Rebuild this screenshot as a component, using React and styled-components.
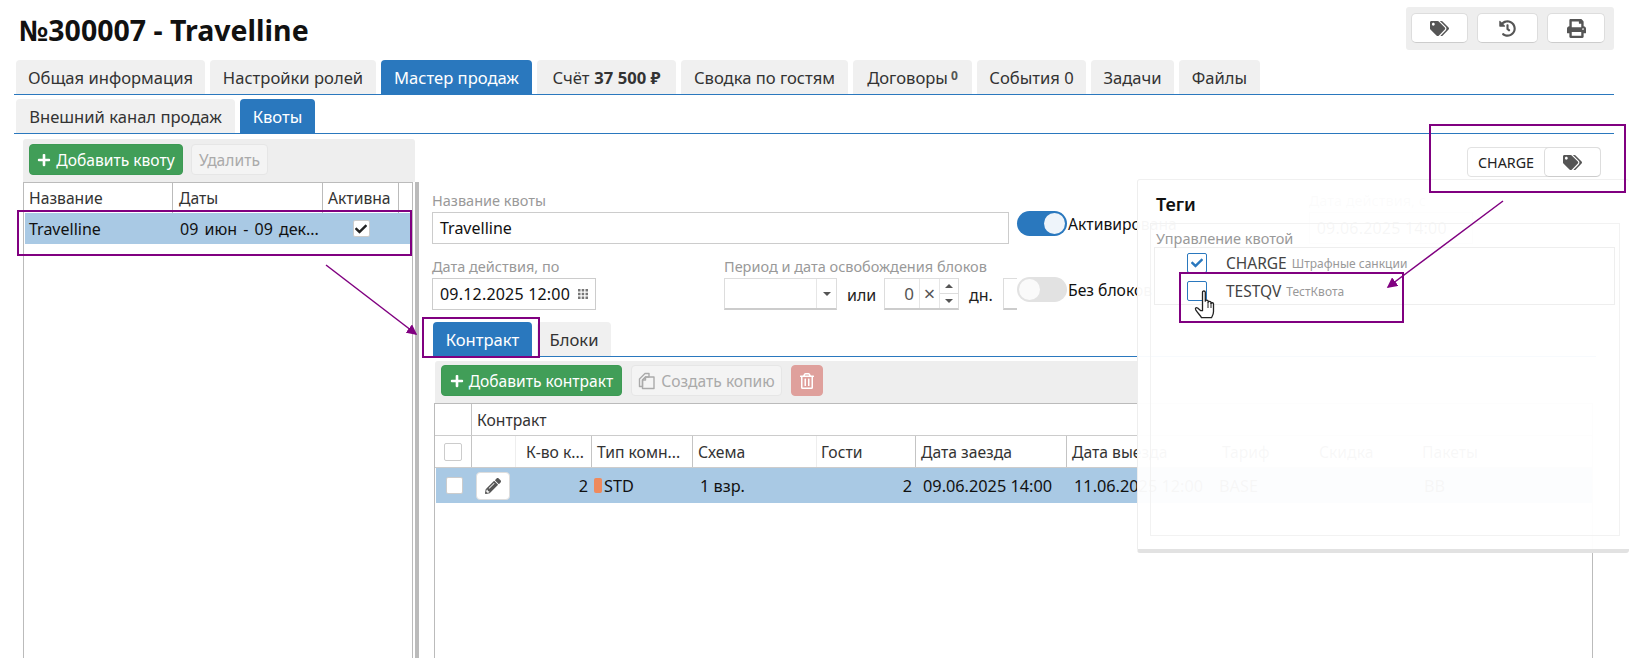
import React from 'react'
import styled, { createGlobalStyle } from 'styled-components'
import { FaTags, FaPrint, FaPlus, FaPencilAlt, FaHistory, FaRegTrashAlt, FaCheck } from 'react-icons/fa'

const Global = createGlobalStyle`
  html, body { margin: 0; padding: 0; background: #fff; overflow: hidden; }
  body { font-family: "Noto Sans", "Liberation Sans", sans-serif; font-size: 16px; color: #222; }
  * { box-sizing: border-box; }
`

const Page = styled.div`
  position: relative;
  width: 1629px;
  height: 658px;
  overflow: hidden;
  padding: 7px 15px 0 14px;
`

const Head = styled.header`
  display: flex;
  justify-content: space-between;
  height: 53px;
`

const Title = styled.h1`
  margin: 7px 0 0 5px;
  font-size: 28.5px;
  line-height: 32px;
  font-weight: 700;
  color: #111;
`

const HeadTools = styled.div`
  display: flex;
  gap: 9px;
  height: 43px;
  padding: 6px 9px 0 5px;
  background: #eee;
  border-radius: 3px;
`

const IconBtn = styled.button`
  display: flex;
  align-items: center;
  justify-content: center;
  width: ${p => p.$w || 58}px;
  height: 30px;
  padding: 0;
  background: #fff;
  border: 1px solid #ddd;
  border-bottom-color: #ccc;
  border-radius: 5px;
  color: #555;
  font-size: 19px;
`

const TabRow = styled.nav`
  display: flex;
  gap: 5px;
  height: 35px;
  margin-top: ${p => p.$top || 0}px;
  width: ${p => (p.$w ? `${p.$w}px` : 'auto')};
  padding-left: ${p => p.$left ?? 2}px;
  border-bottom: 1px solid #2a78be;
`

const Tab = styled.div`
  display: flex;
  align-items: center;
  justify-content: center;
  width: ${p => p.$w}px;
  height: 34px;
  background: ${p => (p.$active ? '#2a78be' : '#f0f0f0')};
  color: ${p => (p.$active ? '#fff' : '#333')};
  border-radius: 4px 4px 0 0;
  font-size: 16.6px;
  white-space: nowrap;
  b { font-weight: 700; margin-left: 5px; }
  small { font-size: 12px; font-weight: 700; margin-left: 3px; color: #555; margin-top: -3px; }
`

const Main = styled.main`
  display: flex;
  height: 525px;
  margin-top: 5px;
`

const LeftPane = styled.section`
  flex: none;
  width: 392px;
  margin-left: 9px;
`

const Toolbar = styled.div`
  display: flex;
  align-items: flex-start;
  gap: ${p => p.$gap || 8}px;
  height: ${p => p.$h || 43}px;
  width: ${p => (p.$w ? `${p.$w}px` : 'auto')};
  margin-left: ${p => p.$left || 0}px;
  padding: ${p => p.$top ?? 5}px 6px 0;
  background: #eee;
  border-radius: 3px 3px 0 0;
`

const Btn = styled.button`
  display: flex;
  align-items: center;
  justify-content: center;
  gap: 5px;
  width: ${p => p.$w}px;
  height: 31px;
  padding: 0;
  font-family: inherit;
  font-size: 15.6px;
  white-space: nowrap;
  border-radius: 4px;
  border: 1px solid ${p => (p.$kind === 'green' ? '#3d9a54' : p.$kind === 'red' ? '#dfa09c' : '#e6e6e6')};
  background: ${p => (p.$kind === 'green' ? '#419e58' : p.$kind === 'red' ? '#dfa09c' : '#f4f4f4')};
  color: ${p => (p.$kind ? '#fff' : '#aaa')};
`

const ListGrid = styled.div`
  width: 390px;
  height: 476px;
  border: 1px solid #bbb;
  border-bottom: 0;
`

const ListHead = styled.div`
  display: grid;
  grid-template-columns: 149px 150px 76px 1fr;
  height: 30px;
`

const HeadCell = styled.div`
  display: flex;
  align-items: center;
  padding-left: ${p => p.$pad ?? 5}px;
  font-size: 15.7px;
  color: #333;
  white-space: nowrap;
  overflow: hidden;
  border-right: ${p => (p.$noline ? 0 : '1px solid #bbb')};
`

const ListRow = styled.div`
  display: grid;
  grid-template-columns: 148px 150px 76px;
  align-items: center;
  height: 31px;
  margin-left: 1px;
  background: #a9c9e4;
  color: #111;
`

const Cell = styled.div`
  padding-left: ${p => p.$pad ?? 4}px;
  font-size: 16px;
  word-spacing: ${p => (p.$wide ? 2 : 0)}px;
  white-space: nowrap;
  overflow: hidden;
`

const CheckCell = styled.div`
  display: flex;
  justify-content: center;
`

const Check = styled.span`
  display: inline-flex;
  align-items: center;
  justify-content: center;
  flex: none;
  width: ${p => p.$size || 17}px;
  height: ${p => p.$size || 17}px;
  background: #fff;
  border: 1px solid ${p => p.$border || '#ccc'};
  border-radius: 2px;
  color: ${p => p.$color || '#222'};
  font-size: 12px;
`

const Splitter = styled.div`
  flex: none;
  width: 4px;
  height: 476px;
  margin-top: 43px;
  background: #bbb;
`

const RightPane = styled.section`
  flex: none;
  width: 1194px;
  padding-left: 13px;
`

const ChipRow = styled.div`
  display: flex;
  justify-content: flex-end;
  height: 53px;
  padding: 8px 12px 0 0;
`

const Chip = styled.div`
  position: relative;
  z-index: 3;
  display: flex;
  align-items: center;
  justify-content: space-between;
  width: 134px;
  height: 30px;
  padding-left: 10px;
  background: #fff;
  border: 1px solid #e2e2e2;
  border-radius: 4px;
  font-size: 14.3px;
  color: #222;
`

const ChipBtn = styled(IconBtn)`
  margin-right: -1px;
`

const FormRow = styled.div`
  display: flex;
  align-items: flex-start;
  margin-bottom: ${p => p.$mb || 0}px;
`

const Field = styled.div`
  flex: none;
  width: ${p => p.$w}px;
  margin-left: ${p => p.$ml || 0}px;
  margin-right: ${p => p.$mr || 0}px;
`

const Label = styled.label`
  display: block;
  height: 20px;
  font-size: 14.5px;
  line-height: 16px;
  color: #999;
  white-space: nowrap;
`

const Input = styled.div`
  display: flex;
  align-items: center;
  justify-content: space-between;
  height: 32px;
  padding: 0 7px;
  border: 1px solid #ccc;
  font-size: 16px;
  letter-spacing: ${p => p.$ls || 0}px;
  color: #111;
  white-space: nowrap;
`

const Spin = styled.div`
  flex: none;
  display: flex;
  align-items: stretch;
  width: ${p => p.$w}px;
  height: 32px;
  border: 1px solid #ddd;
  border-right-width: ${p => (p.$open ? 0 : 1)}px;
  border-bottom: 2px solid #ccc;
  background: #fff;
`

const SpinValue = styled.div`
  flex: 1;
  display: flex;
  align-items: center;
  justify-content: flex-end;
  padding-right: 5px;
  font-size: 17px;
  color: #555;
`

const SpinSide = styled.div`
  flex: none;
  width: ${p => p.$w}px;
  display: flex;
  flex-direction: column;
  align-items: stretch;
  justify-content: center;
  border-left: 1px solid #e6e6e6;
  color: #555;
  font-size: 20px;
  text-align: center;
`

const ArrowCell = styled.span`
  flex: 1;
  display: flex;
  align-items: center;
  justify-content: center;
  border-bottom: ${p => (p.$line ? '1px solid #ddd' : 0)};
`

const Arrow = styled.span`
  width: 0;
  height: 0;
  border-left: 4px solid transparent;
  border-right: 4px solid transparent;
  ${p => (p.$up ? 'border-bottom: 4px solid #555;' : 'border-top: 4px solid #555;')}
`

const Plain = styled.span`
  flex: none;
  width: ${p => p.$w}px;
  padding: 6px 0 0 10px;
  font-size: 16px;
  color: #222;
`

const ToggleWrap = styled.div`
  flex: none;
  display: flex;
  align-items: center;
  gap: 1px;
  margin: 19px 0 0 ${p => p.$left || 0}px;
  height: 25px;
  font-size: 15.7px;
  color: #111;
  white-space: nowrap;
`

const Track = styled.span`
  display: flex;
  justify-content: ${p => (p.$on ? 'flex-end' : 'flex-start')};
  align-items: center;
  width: 50px;
  height: 25px;
  padding: 2px;
  border-radius: 13px;
  background: ${p => (p.$on ? '#2a78be' : '#e2e2e2')};
`

const Knob = styled.span`
  width: 21px;
  height: 21px;
  border-radius: 50%;
  background: ${p => (p.$on ? '#eef4fa' : '#fafafa')};
`

const Spacer = styled.div`
  height: 4px;
`

const GridBox = styled.div`
  width: 1159px;
  height: 255px;
  margin-left: 2px;
  border: 1px solid #bbb;
  border-bottom: 0;
`

const Row = styled.div`
  display: flex;
  align-items: center;
  height: ${p => p.$h || 32}px;
  background: ${p => (p.$sel ? '#a9c9e4' : 'transparent')};
  border-bottom: ${p => (p.$line ? '1px solid #ccc' : 0)};
  margin-left: ${p => (p.$sel ? 1 : 0)}px;
  color: ${p => (p.$sel ? '#111' : '#333')};
  font-size: ${p => (p.$sel ? 16.3 : 15.7)}px;
`

const Col = styled.div`
  flex: none;
  display: flex;
  align-items: center;
  justify-content: ${p => p.$just || 'flex-start'};
  width: ${p => p.$w}px;
  height: 100%;
  padding-left: ${p => p.$pad ?? 5}px;
  padding-right: ${p => p.$right || 0}px;
  white-space: nowrap;
  overflow: hidden;
  border-right: ${p => (p.$line ? `1px solid ${p.$soft ? '#eee' : '#c4c4c4'}` : 0)};
`

const Swatch = styled.span`
  flex: none;
  width: 8px;
  height: 15px;
  margin-right: 2px;
  border-radius: 2px;
  background: #ef8a5d;
`

const EditBtn = styled.span`
  display: flex;
  align-items: center;
  justify-content: center;
  width: 34px;
  height: 28px;
  background: #fff;
  border: 1px solid #ddd;
  border-radius: 4px;
  color: #555;
  font-size: 16px;
`

const TagsPanel = styled.aside`
  position: absolute;
  left: 1137px;
  top: 179px;
  width: 492px;
  height: 374px;
  padding: 12px 0 0 12px;
  background: rgba(255, 255, 255, 0.965);
  border-top: 1px solid #f0f0f0;
  border-left: 1px solid #eee;
  border-bottom: 4px solid #e2e2e2;
  border-radius: 3px;
`

const PanelTitle = styled.div`
  height: 31px;
  margin-left: 6px;
  font-size: 18px;
  line-height: 25px;
  font-weight: 600;
  color: #111;
`

const PanelBox = styled.div`
  width: 470px;
  height: 313px;
  padding: 5px 0 0 5px;
  border: 1px solid #f2f2f2;
`

const PanelLabel = styled.div`
  height: 18px;
  font-size: 14.5px;
  line-height: 19px;
  color: #999;
`

const TagList = styled.div`
  width: 461px;
  height: 58px;
  margin-left: -2px;
  padding: 1px 0 0 32px;
  border: 1px solid #eee;
`

const TagLine = styled.div`
  display: flex;
  align-items: center;
  height: 28px;
`

const TagName = styled.span`
  margin-left: 19px;
  font-size: 15.5px;
  color: #444;
`

const TagNote = styled.span`
  margin-left: 5px;
  font-size: 12px;
  color: #999;
`

// annotations drawn on the screenshot
const Frame = styled.div`
  position: absolute;
  left: ${p => p.$x}px;
  top: ${p => p.$y}px;
  width: ${p => p.$w}px;
  height: ${p => p.$h}px;
  border: 2px solid #800080;
  pointer-events: none;
  z-index: 5;
`

const Marks = styled.svg`
  position: absolute;
  left: 0;
  top: 0;
  z-index: 6;
  pointer-events: none;
`

const HandIcon = styled.svg`
  position: absolute;
  left: 1193px;
  top: 290px;
  z-index: 7;
`

const Hand = () => (
  <HandIcon width="24" height="31" viewBox="0 0 24 31">
    <path
      d="M9.500 2.200c0-1.600 2.800-1.600 2.800 0v9c.2-1.400 2.800-1.500 2.900 0v1c.3-1.300 2.700-1.200 2.800.2v1c.4-1 2.400-.9 2.500.5v7.500c0 3-1.200 4.300-2 6.300H8.500c-1-2.200-3.500-4.300-5.600-7.500-1.200-2 .2-3.200 1.700-2.200l3.200 2.700h1.700z"
      fill="#fff"
      stroke="#222"
      strokeWidth="1.3"
      strokeLinejoin="round"
    />
    <path d="M15 12v6M18 13v5" stroke="#222" strokeWidth="1" fill="none" />
  </HandIcon>
)

const CopyIcon = () => (
  <svg width="18" height="18" viewBox="0 0 18 18" fill="none" stroke="#aaa" strokeWidth="1.4" strokeLinejoin="round">
    <path d="M7 1.500h4v3.500H7.500L4.500 8v6.500H1.500V7z" />
    <path d="M7.500 5H16v11.500H4.500V8z" />
    <path d="M7.500 5v3h-3" />
  </svg>
)

const GridIcon = () => (
  <svg width="10" height="10" viewBox="0 0 10 10" fill="#777">
    <path d="M0 0h2.500v2.500H0zM3.700 0h2.500v2.500H3.700zM7.500 0H10v2.500H7.500zM0 3.700h2.500v2.500H0zM3.700 3.700h2.500v2.500H3.700zM7.500 3.700H10v2.500H7.500zM0 7.500h2.500V10H0zM3.700 7.500h2.500V10H3.700zM7.500 7.500H10V10H7.500z" />
  </svg>
)

const columns = [
  { w: 44, line: true, soft: true },
  { w: 76, text: 'К-во к...', line: true, pad: 10 },
  { w: 101, text: 'Тип комн...', line: true },
  { w: 124, text: 'Схема', line: true, soft: true },
  { w: 99, text: 'Гости', line: true, pad: 4 },
  { w: 151, text: 'Дата заезда', line: true },
  { w: 150, text: 'Дата выезда', line: true, soft: true },
  { w: 99, text: 'Тариф', line: true, soft: true },
  { w: 101, text: 'Скидка', line: true, soft: true, pad: 3 },
  { w: 174, text: 'Пакеты', line: true, soft: true },
]

export default function App() {
  return (
    <Page>
      <Global />
      <Head>
        <Title>№300007 - Travelline</Title>
        <HeadTools>
          <IconBtn $w={57}><FaTags /></IconBtn>
          <IconBtn $w={61}><FaHistory size={17} /></IconBtn>
          <IconBtn><FaPrint /></IconBtn>
        </HeadTools>
      </Head>

      <TabRow>
        <Tab $w={189}>Общая информация</Tab>
        <Tab $w={166}>Настройки ролей</Tab>
        <Tab $w={151} $active>Мастер продаж</Tab>
        <Tab $w={139}>Счёт<b>37 500 ₽</b></Tab>
        <Tab $w={167}>Сводка по гостям</Tab>
        <Tab $w={119}>Договоры<small>0</small></Tab>
        <Tab $w={109}>События 0</Tab>
        <Tab $w={83}>Задачи</Tab>
        <Tab $w={81}>Файлы</Tab>
      </TabRow>
      <TabRow $top={4}>
        <Tab $w={219}>Внешний канал продаж</Tab>
        <Tab $w={75} $active>Квоты</Tab>
      </TabRow>

      <Main>
        <LeftPane>
          <Toolbar>
            <Btn $w={154} $kind="green"><FaPlus size={14} />Добавить квоту</Btn>
            <Btn $w={77}>Удалить</Btn>
          </Toolbar>
          <ListGrid>
            <ListHead>
              <HeadCell>Название</HeadCell>
              <HeadCell $pad={6}>Даты</HeadCell>
              <HeadCell>Активна</HeadCell>
              <HeadCell $noline />
            </ListHead>
            <ListRow>
              <Cell>Travelline</Cell>
              <Cell $pad={7} $wide>09 июн - 09 дек...</Cell>
              <CheckCell><Check><FaCheck /></Check></CheckCell>
            </ListRow>
          </ListGrid>
        </LeftPane>
        <Splitter />
        <RightPane>
          <ChipRow>
            <Chip>
              CHARGE
              <ChipBtn $w={57}><FaTags /></ChipBtn>
            </Chip>
          </ChipRow>
          <FormRow $mb={14}>
            <Field $w={577}>
              <Label>Название квоты</Label>
              <Input>Travelline</Input>
            </Field>
            <ToggleWrap $left={8}>
              <Track $on><Knob $on /></Track>
              Активирована
            </ToggleWrap>
            <Field $w={164} $ml={132}>
              <Label>Дата действия, с</Label>
              <Input $ls={0.2}>09.06.2025 14:00</Input>
            </Field>
          </FormRow>
          <FormRow>
            <Field $w={164} $mr={128}>
              <Label>Дата действия, по</Label>
              <Input $ls={0.2}>
                09.12.2025 12:00
                <GridIcon />
              </Input>
            </Field>
            <div>
              <Label>Период и дата освобождения блоков</Label>
              <FormRow>
                <Spin $w={113}>
                  <SpinValue />
                  <SpinSide $w={20}><ArrowCell><Arrow /></ArrowCell></SpinSide>
                </Spin>
                <Plain $w={47}>или</Plain>
                <Spin $w={75}>
                  <SpinValue>0</SpinValue>
                  <SpinSide $w={20}>×</SpinSide>
                  <SpinSide $w={19}>
                    <ArrowCell $line><Arrow $up /></ArrowCell>
                    <ArrowCell><Arrow /></ArrowCell>
                  </SpinSide>
                </Spin>
                <Plain $w={44}>дн.</Plain>
                <Spin $w={14} $open />
              </FormRow>
            </div>
            <ToggleWrap>
              <Track><Knob /></Track>
              Без блоков
            </ToggleWrap>
          </FormRow>
          <TabRow $left={1} $top={12} $w={1164}>
            <Tab $w={99} $active>Контракт</Tab>
            <Tab $w={74}>Блоки</Tab>
          </TabRow>
          <Spacer />
          <Toolbar $gap={9} $h={42} $w={1162} $left={3} $top={4}>
            <Btn $w={181} $kind="green"><FaPlus size={14} />Добавить контракт</Btn>
            <Btn $w={151}><CopyIcon />Создать копию</Btn>
            <Btn $w={32} $kind="red"><FaRegTrashAlt size={16} /></Btn>
          </Toolbar>
          <GridBox>
            <Row $line>
              <Col $w={37} $line />
              <Col $w={400}>Контракт</Col>
            </Row>
            <Row $line>
              <Col $w={37} $pad={9} $line><Check $size={18} /></Col>
              {columns.map((c, i) => (
                <Col key={i} $w={c.w} $pad={c.pad} $line={c.line} $soft={c.soft}>{c.text}</Col>
              ))}
            </Row>
            <Row $sel $h={35}>
              <Col $w={37} $pad={10}><Check $size={17} /></Col>
              <Col $w={43} $pad={3}><EditBtn><FaPencilAlt /></EditBtn></Col>
              <Col $w={76} $just="flex-end" $right={4}>2</Col>
              <Col $w={101} $pad={2}><Swatch />STD</Col>
              <Col $w={124} $pad={7}>1 взр.</Col>
              <Col $w={99} $just="flex-end" $right={4}>2</Col>
              <Col $w={151} $pad={7}>09.06.2025 14:00</Col>
              <Col $w={150} $pad={7}>11.06.2025 12:00</Col>
              <Col $w={99} $pad={2}>BASE</Col>
              <Col $w={101} />
              <Col $w={174} $pad={7}>BB</Col>
            </Row>
          </GridBox>
        </RightPane>
      </Main>

      <TagsPanel>
        <PanelTitle>Теги</PanelTitle>
        <PanelBox>
          <PanelLabel>Управление квотой</PanelLabel>
          <TagList>
            <TagLine>
              <Check $size={20} $border="#2a78be" $color="#2a78be"><FaCheck /></Check>
              <TagName>CHARGE</TagName>
              <TagNote>Штрафные санкции</TagNote>
            </TagLine>
            <TagLine>
              <Check $size={20} $border="#2a78be" />
              <TagName>TESTQV</TagName>
              <TagNote>ТестКвота</TagNote>
            </TagLine>
          </TagList>
        </PanelBox>
      </TagsPanel>

      <Frame $x={17} $y={210} $w={395} $h={46} />
      <Frame $x={422} $y={317} $w={118} $h={41} />
      <Frame $x={1179} $y={272} $w={225} $h={51} />
      <Frame $x={1429} $y={124} $w={197} $h={69} />
      <Marks width="1629" height="658">
        <defs>
          <marker id="tip" markerWidth="7" markerHeight="7" refX="6" refY="3.500" orient="auto">
            <path d="M0 0L7 3.500L0 7z" fill="#800080" />
          </marker>
        </defs>
        <line x1="326" y1="265" x2="416" y2="334" stroke="#800080" strokeWidth="1.500" markerEnd="url(#tip)" />
        <line x1="1503" y1="201" x2="1388" y2="287" stroke="#800080" strokeWidth="1.500" markerEnd="url(#tip)" />
      </Marks>
      <Hand />
    </Page>
  )
}
